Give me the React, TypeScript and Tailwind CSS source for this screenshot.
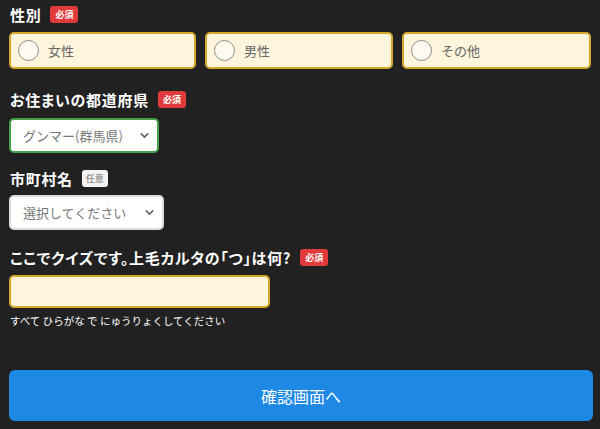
import React from "react";
import { ChevronDown } from "lucide-react";

const font = { fontFamily: '"Noto Sans CJK JP", "Noto Sans", sans-serif' };

function Required() {
  return (
    <span className="ml-[9px] inline-flex h-[17px] w-[28px] items-center justify-center rounded-[3px] bg-[#e03a3a] text-[9px] font-bold leading-none text-white">
      必須
    </span>
  );
}

function Optional() {
  return (
    <span className="ml-[9px] inline-flex h-[17px] w-[26px] items-center justify-center rounded-[3px] bg-[#f4f4f4] text-[9px] font-bold leading-none text-[#9a9a9a]">
      任意
    </span>
  );
}

function Label({ text, badge }: { text: string; badge: React.ReactNode }) {
  return (
    <div className="flex h-[20px] items-center">
      <span className="text-[15px] font-bold leading-none tracking-[0.7px] text-white [font-feature-settings:'palt']">{text}</span>
      {badge}
    </div>
  );
}

function Radio({ label, width }: { label: string; width: string }) {
  return (
    <label className={`flex h-[37px] ${width} items-center rounded-[5px] border-2 border-[#d6a92c] bg-[#fff5dc]`}>
      <span className="ml-[7px] h-[21px] w-[21px] rounded-full border-[1.5px] border-[#8a8a8a] bg-[#fffaf0]" />
      <span className="ml-[9px] text-[13px] text-[#666]">{label}</span>
    </label>
  );
}

function Select({ value, width, border }: { value: string; width: string; border: string }) {
  return (
    <div className={`flex h-[35px] ${width} items-center justify-between rounded-[5px] border-2 ${border} bg-white pl-[12px] pr-[6px]`}>
      <span className="text-[13px] text-[#777]">{value}</span>
      <ChevronDown size={13} strokeWidth={3} className="text-[#666]" />
    </div>
  );
}

export default function App() {
  return (
    <div className="h-[429px] w-[600px] overflow-hidden bg-[#212121] pl-[9px]" style={font}>
      <div className="pt-[4px]">
        <div className="pl-[1px]">
          <Label text="性別" badge={<Required />} />
        </div>
        <div className="mt-[8px] flex gap-[9px]">
          <Radio label="女性" width="w-[187px]" />
          <Radio label="男性" width="w-[188px]" />
          <Radio label="その他" width="w-[189px]" />
        </div>
      </div>

      <div className="mt-[20px] pl-[1px]">
        <Label text="お住まいの都道府県" badge={<Required />} />
      </div>
      <div className="mt-[9px]">
        <Select value="グンマー(群馬県)" width="w-[150px]" border="border-[#45a049]" />
      </div>

      <div className="mt-[15px] pl-[1px]">
        <Label text="市町村名" badge={<Optional />} />
      </div>
      <div className="mt-[7px]">
        <Select value="選択してください" width="w-[155px]" border="border-[#dcdcdc]" />
      </div>

      <div className="mt-[17px] pl-[1px]">
        <Label text="ここでクイズです。上毛カルタの「つ」は何?" badge={<Required />} />
      </div>
      <div className="mt-[8px] h-[33px] w-[261px] rounded-[5px] border-2 border-[#d6a92c] bg-[#fff5dc]" />
      <div className="mt-[6px] pl-[1px] text-[10.5px] leading-[14px] text-white">
        すべて ひらがな で にゅうりょくしてください
      </div>

      <button className="mt-[42px] flex h-[51px] w-[584px] items-center justify-center rounded-[6px] bg-[#1e88e5] text-[16px] text-white">
        確認画面へ
      </button>
    </div>
  );
}
